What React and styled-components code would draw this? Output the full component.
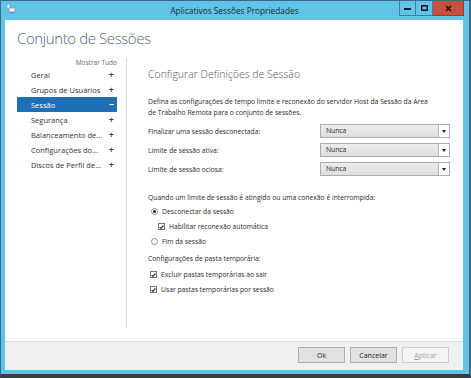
import styled, { createGlobalStyle } from "styled-components"

const GlobalStyle = createGlobalStyle`
  html, body { margin: 0; padding: 0; background: #fff; }
  body { font-family: "Open Sans", "Noto Sans", sans-serif; color: #1e1e1e; }
  * { box-sizing: border-box; }
`

const Janela = styled.div`
  width: 471px;
  height: 378px;
  display: flex;
  flex-direction: column;
  background: #5fc4e8;
  border: 1px solid #3b6a85;
  border-right-width: 2px;
  border-bottom: 4px solid #3a3d40;
  padding: 0 6px 4px 4px;
`

const BarraTitulo = styled.div`
  height: 19px;
  margin-right: -1px;
  display: grid;
  grid-template-columns: 1fr auto 1fr;
  align-items: start;
`

const IconeJanela = styled.svg`
  margin: 2px 0 0 1px;
`

const Titulo = styled.div`
  font-size: 8.3px;
  line-height: 19px;
  color: #1a2a33;
`

const Controles = styled.div`
  justify-self: end;
  display: flex;
  height: 15px;
`

const BotaoControle = styled.div`
  width: ${p => (p.$fechar ? 31 : 17)}px;
  height: 15px;
  display: flex;
  align-items: center;
  justify-content: center;
  background: ${p => (p.$fechar ? "#c7503f" : "transparent")};
  border: 1px solid ${p => (p.$fechar ? "#9c3a2e" : "#3f7f9c")};
  border-left-width: ${p => (p.$primeiro ? 1 : 0)}px;
  border-top: 0;
`

const AreaCliente = styled.div`
  flex: 1;
  background: #fff;
  display: flex;
  flex-direction: column;
`

const Cabecalho = styled.div`
  height: 38px;
  padding: 8px 0 0 12px;
  font-size: 15px;
  font-weight: 300;
  letter-spacing: -0.4px;
  color: #52697c;
  line-height: 20px;
`

const Corpo = styled.div`
  flex: 1;
  display: flex;
`

const Navegacao = styled.nav`
  width: 110px;
  margin: 0 0 13px 12px;
  padding-right: 9px;
  border-right: 1px solid #d6d6d6;
`

const MostrarTudo = styled.div`
  font-size: 6.5px;
  line-height: 8px;
  margin-top: 1px;
  text-align: right;
  color: #6a6a6a;
`

const ItemNav = styled.div`
  height: 15px;
  display: flex;
  align-items: center;
  justify-content: space-between;
  padding: 0 3px 0 14px;
  font-size: 7.5px;
  white-space: nowrap;
  background: ${p => (p.$ativo ? "#1f6fb6" : "transparent")};
  color: ${p => (p.$ativo ? "#fff" : "#333")};

  span:last-child {
    font-size: 9px;
    font-weight: 700;
    color: ${p => (p.$ativo ? "#fff" : "#444")};
  }
`

const Conteudo = styled.section`
  flex: 1;
  padding: 8px 0 0 21px;
  font-size: 6.75px;
  color: #2a2a2a;
`

const Titulo2 = styled.h2`
  margin: 0;
  font-size: 10.5px;
  font-weight: 300;
  line-height: 16px;
  color: #555;
`

const Paragrafo = styled.p`
  margin: 14px 0 0;
  line-height: 11px;
  white-space: nowrap;
`

const Campos = styled.div`
  margin-top: 6px;
  display: grid;
  grid-template-columns: 172px 130px;
  grid-auto-rows: 14px;
  row-gap: 5px;
  align-items: center;
`

const Combo = styled.div`
  height: 14px;
  display: flex;
  border: 1px solid #acacac;
  background: linear-gradient(#ececec, #dedede);
`

const ComboTexto = styled.div`
  flex: 1;
  padding-left: 5px;
  line-height: 12px;
`

const ComboSeta = styled.div`
  width: 11px;
  background: #fff;
  border-left: 1px solid #b9b9b9;
  display: flex;
  align-items: center;
  justify-content: center;

  &::after {
    content: "";
    border-left: 2.5px solid transparent;
    border-right: 2.5px solid transparent;
    border-top: 3px solid #222;
  }
`

const Rotulo = styled.div`
  margin-top: ${p => p.$mt}px;
  line-height: 11px;
`

const Opcoes = styled.div`
  margin-top: ${p => p.$mt}px;
`

const Opcao = styled.div`
  height: 15px;
  display: flex;
  align-items: center;
  gap: 4px;
  padding-left: ${p => p.$recuo}px;
`

const Radio = styled.span`
  width: 7px;
  height: 7px;
  border-radius: 50%;
  border: 1px solid #8a8a8a;
  background: #fff;
  display: flex;
  align-items: center;
  justify-content: center;

  &::after {
    content: "";
    width: 3px;
    height: 3px;
    border-radius: 50%;
    background: ${p => (p.$marcado ? "#222" : "transparent")};
  }
`

const Caixa = styled.span`
  width: 7px;
  height: 7px;
  border: 1px solid #7a7a7a;
  background: #fff;
  display: flex;
  align-items: center;
  justify-content: center;
`

const Rodape = styled.div`
  height: 29px;
  border-top: 1px solid #dcdcdc;
  background: #f0f0f0;
  display: flex;
  justify-content: flex-end;
  gap: 5px;
  padding: 5px 14px 0 0;
`

const Botao = styled.div`
  width: 47px;
  height: 16px;
  display: flex;
  align-items: center;
  justify-content: center;
  font-size: 7px;
  border: 1px solid ${p => (p.$desativado ? "#cfcfcf" : "#acacac")};
  background: ${p => (p.$desativado ? "#f4f4f4" : "#e1e1e1")};
  color: ${p => (p.$desativado ? "#a3a3a3" : "#222")};

  u { text-decoration-thickness: 0.5px; }
`

const Marca = () => (
  <svg width="6" height="6" viewBox="0 0 6 6">
    <path d="M0.8 3.2 L2.4 4.8 L5.2 1" fill="none" stroke="#222" strokeWidth="1.3" />
  </svg>
)

const navItens = [
  "Geral",
  "Grupos de Usuários",
  "Sessão",
  "Segurança",
  "Balanceamento de...",
  "Configurações do...",
  "Discos de Perfil de...",
]

const campos = [
  "Finalizar uma sessão desconectada:",
  "Limite de sessão ativa:",
  "Limite de sessão ociosa:",
]

const App = () => {
  return (
    <Janela>
      <GlobalStyle />
      <BarraTitulo>
        <IconeJanela width="10" height="11" viewBox="0 0 10 11">
          <rect x="1" y="1" width="3" height="5" fill="#eef6fa" stroke="#6d8896" strokeWidth="0.6" />
          <rect x="3" y="5" width="6" height="4" fill="#eef6fa" stroke="#6d8896" strokeWidth="0.6" />
          <rect x="4" y="9.2" width="4" height="1" fill="#6d8896" />
        </IconeJanela>
        <Titulo>Aplicativos Sessões Propriedades</Titulo>
        <Controles>
          <BotaoControle $primeiro>
            <svg width="7" height="3"><rect width="7" height="2" y="1" fill="#1b1b1b" /></svg>
          </BotaoControle>
          <BotaoControle>
            <svg width="7" height="6"><rect x="0.75" y="0.75" width="5.5" height="4.5" fill="none" stroke="#1b1b1b" strokeWidth="1.5" /></svg>
          </BotaoControle>
          <BotaoControle $fechar>
            <svg width="7" height="7"><path d="M1 1 L6 6 M6 1 L1 6" stroke="#2a0e0a" strokeWidth="1.6" /></svg>
          </BotaoControle>
        </Controles>
      </BarraTitulo>
      <AreaCliente>
        <Cabecalho>Conjunto de Sessões</Cabecalho>
        <Corpo>
          <Navegacao>
            <MostrarTudo>Mostrar Tudo</MostrarTudo>
            {navItens.map(item => (
              <ItemNav key={item} $ativo={item === "Sessão"}>
                <span>{item}</span>
                <span>{item === "Sessão" ? "−" : "+"}</span>
              </ItemNav>
            ))}
          </Navegacao>
          <Conteudo>
            <Titulo2>Configurar Definições de Sessão</Titulo2>
            <Paragrafo>
              Defina as configurações de tempo limite e reconexão do servidor Host da Sessão da Área
              <br />
              de Trabalho Remota para o conjunto de sessões.
            </Paragrafo>
            <Campos>
              {campos.map(c => (
                <>
                  <div key={c}>{c}</div>
                  <Combo key={c + "-combo"}>
                    <ComboTexto>Nunca</ComboTexto>
                    <ComboSeta />
                  </Combo>
                </>
              ))}
            </Campos>
            <Rotulo $mt={16}>Quando um limite de sessão é atingido ou uma conexão é interrompida:</Rotulo>
            <Opcoes $mt={1}>
              <Opcao $recuo={3}><Radio $marcado />Desconectar da sessão</Opcao>
              <Opcao $recuo={10}><Caixa><Marca /></Caixa>Habilitar reconexão automática</Opcao>
              <Opcao $recuo={3}><Radio />Fim da sessão</Opcao>
            </Opcoes>
            <Rotulo $mt={4}>Configurações de pasta temporária:</Rotulo>
            <Opcoes $mt={3}>
              <Opcao $recuo={2}><Caixa><Marca /></Caixa>Excluir pastas temporárias ao sair</Opcao>
              <Opcao $recuo={2}><Caixa><Marca /></Caixa>Usar pastas temporárias por sessão</Opcao>
            </Opcoes>
          </Conteudo>
        </Corpo>
        <Rodape>
          <Botao>Ok</Botao>
          <Botao>Cancelar</Botao>
          <Botao $desativado><span><u>A</u>plicar</span></Botao>
        </Rodape>
      </AreaCliente>
    </Janela>
  )
}

export default App
